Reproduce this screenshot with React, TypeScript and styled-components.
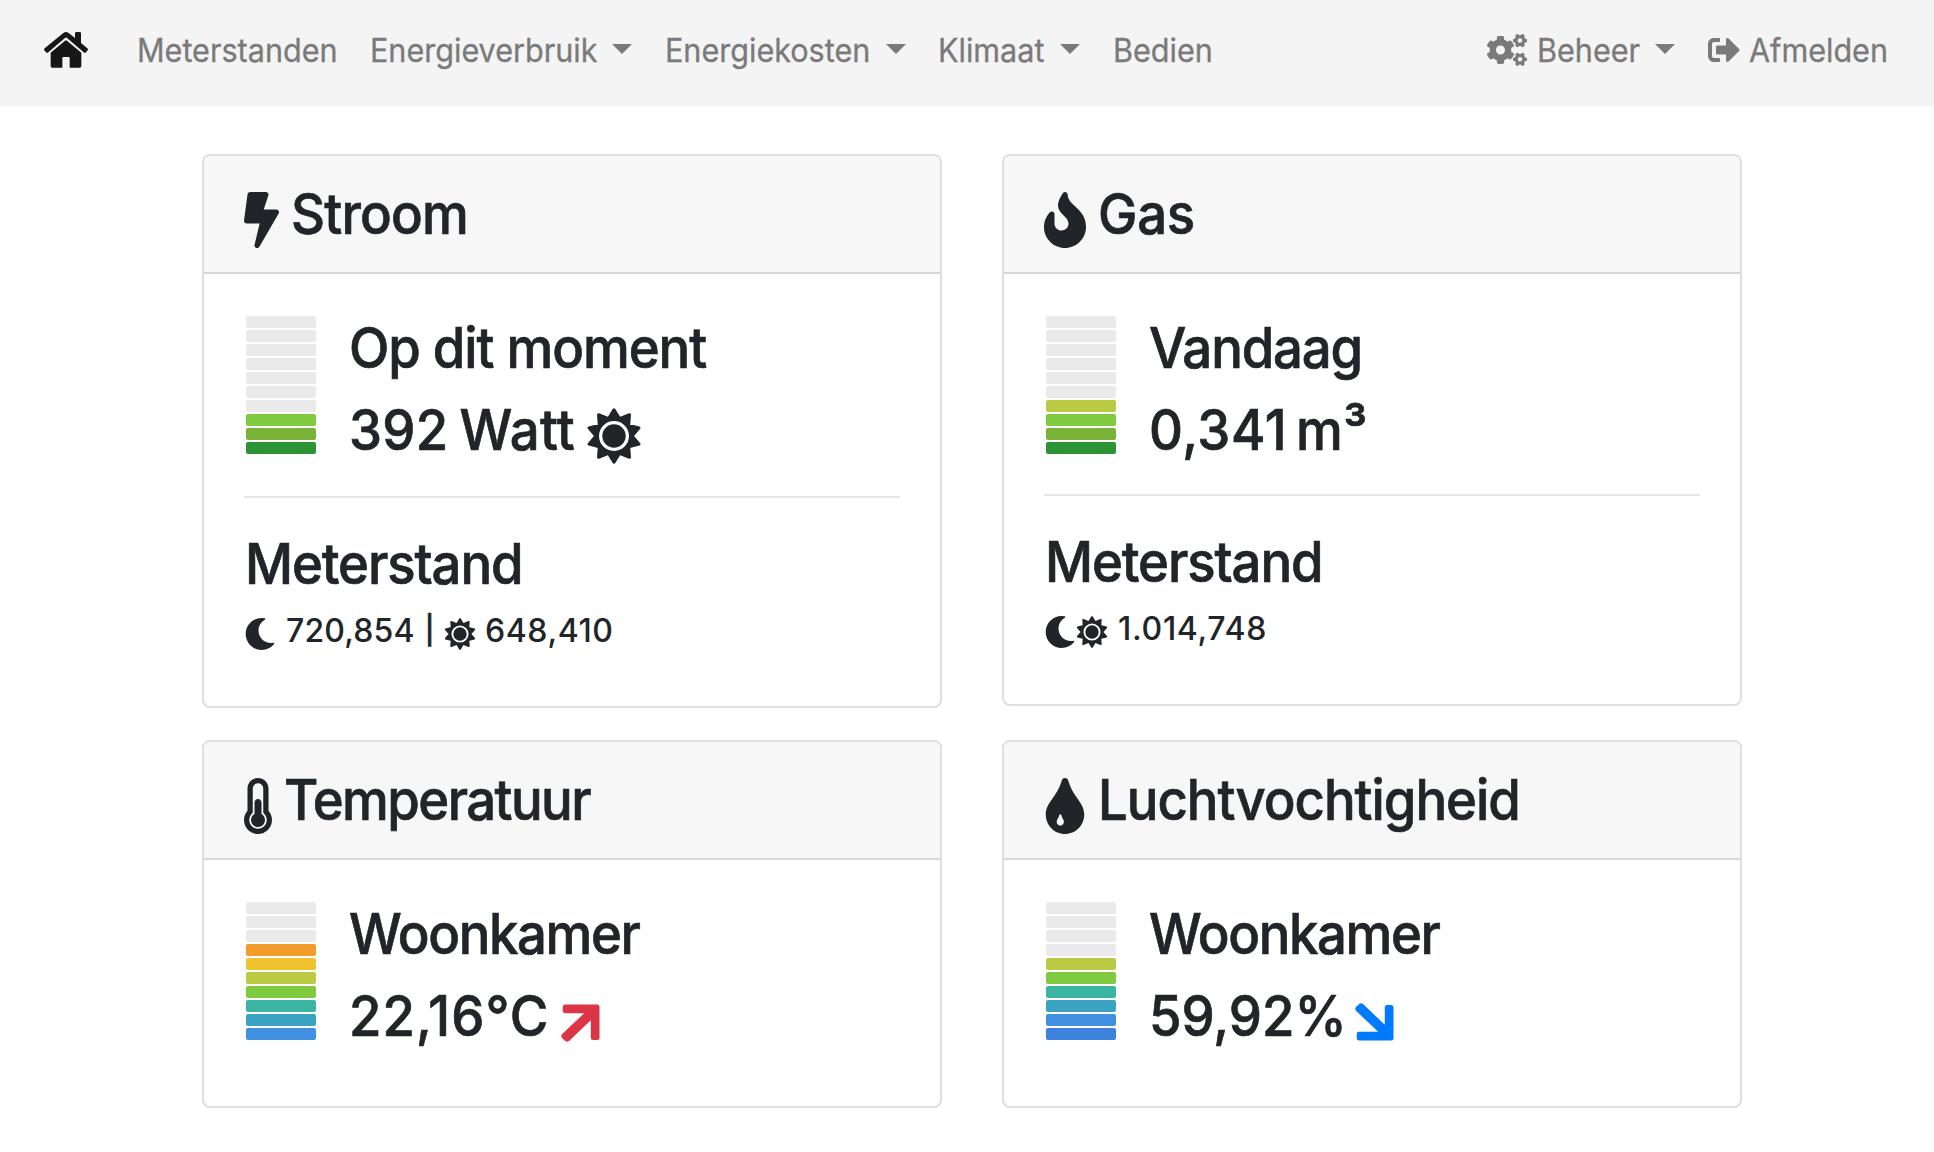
import React from "react";
import styled, { createGlobalStyle } from "styled-components";
import { FaBolt, FaCogs, FaFire, FaSignOutAlt, FaThermometerHalf } from "react-icons/fa";

const GlobalStyle = createGlobalStyle`
  * { box-sizing: border-box; }
  body {
    margin: 0;
    background: #fff;
    color: #212529;
    font-family: Inter, "Liberation Sans", sans-serif;
  }
  h2, h3, h4, p { margin: 0; font-weight: 500; }
  svg { display: block; flex: none; }
`;

/* ---------- navigation ---------- */

const NavBar = styled.nav`
  display: flex;
  justify-content: space-between;
  height: 106px;
  padding: 26px 46px 0 44px;
  background: #f4f4f4;
  color: #7a7a7a;
`;

const NavGroup = styled.div`
  display: flex;
  height: 48px;
  align-items: center;
  gap: 32.8px;
`;

const Brand = styled.a`
  margin-right: 16px;
  color: #171717;
`;

const NavItem = styled.a<{ $width: number }>`
  display: flex;
  align-items: center;
  width: ${(p) => p.$width}px;
`;

const NavText = styled.span<{ $indent?: number }>`
  margin-left: ${(p) => p.$indent ?? 0}px;
  padding-top: 2px;
  font-size: 32px;
  -webkit-text-stroke: 0.3px currentColor;
  line-height: 48px;
  white-space: nowrap;
  transform: scaleX(0.955);
  transform-origin: left center;
`;

const Caret = styled.span`
  flex: none;
  width: 0;
  margin: -2px 0 0 auto;
  border: 10px solid transparent;
  border-top-color: currentColor;
  border-bottom: 0;
`;

/* ---------- cards ---------- */

const Grid = styled.main`
  display: grid;
  grid-template-columns: 740px 740px;
  column-gap: 60px;
  row-gap: 32px;
  align-items: start;
  padding: 48px 0 0 202px;
`;

const CardBox = styled.section<{ $height: number }>`
  height: ${(p) => p.$height}px;
  border: 2px solid #dfdfdf;
  border-radius: 8px;
  overflow: hidden;
`;

const CardHeader = styled.header`
  display: flex;
  height: 118px;
  padding: 25px 40px 0;
  background: #f7f7f7;
  border-bottom: 2px solid #d8d8d8;
`;

const CardBody = styled.div`
  padding: 40px 40px 0;
`;

const IconSlot = styled.span<{ $gap?: number; $top?: number; $color?: string }>`
  flex: none;
  margin: ${(p) => p.$top ?? 11}px 0 0 ${(p) => p.$gap ?? 0}px;
  color: ${(p) => p.$color ?? "inherit"};
`;

const Heading = styled.h2<{ $spacing: number; $indent?: number; $width?: number; $word?: number }>`
  width: ${(p) => (p.$width ? p.$width + "px" : "auto")};
  margin-left: ${(p) => p.$indent ?? 0}px;
  font-size: 56px;
  -webkit-text-stroke: 0.7px currentColor;
  line-height: 67px;
  letter-spacing: ${(p) => p.$spacing}px;
  word-spacing: ${(p) => p.$word ?? 0}px;
  white-space: nowrap;
  transform: scaleX(0.94);
  transform-origin: left center;
`;

const Metric = styled.div<{ $ruled?: number }>`
  display: flex;
  gap: 32px;
  padding-left: 2px;
  height: ${(p) => p.$ruled ?? 180}px;
`;

const Gauge = styled.div`
  display: flex;
  flex-direction: column;
  gap: 2px;
  width: 70px;
  padding-top: 2px;
`;

const Segment = styled.span<{ $color: string }>`
  height: 12px;
  border-radius: 2px;
  background: ${(p) => p.$color};
`;

const Lines = styled.div`
  display: flex;
  flex-direction: column;
  gap: 15px;
  padding-top: 1px;
`;

const Line = styled.div`
  display: flex;
  height: 67px;
`;

const Rule = styled.hr`
  height: 2px;
  margin: 0 0 33px;
  border: 0;
  background: #e5e5e5;
`;

const Readings = styled.div`
  display: flex;
  margin-top: 13px;
`;

const Reading = styled.p<{ $spacing: number; $width: number; $indent: number }>`
  width: ${(p) => p.$width}px;
  margin-left: ${(p) => p.$indent}px;
  font-size: 32px;
  line-height: 39px;
  letter-spacing: ${(p) => p.$spacing}px;
  white-space: nowrap;
`;

const Separator = styled(Reading)`
  font-size: 28px;
  -webkit-text-stroke: 0.6px currentColor;
  text-align: center;
`;

/* ---------- icons ---------- */

const HomeIcon = () => (
  <svg width="44" height="36" viewBox="0 0 132 108" fill="currentColor">
    <path d="M58 3Q66-3 74 3L93 18V4Q93 0 97 0H107Q111 0 111 4V33L130 49Q133 52 131 55L126 61Q123 64 119 61L69 18Q66 15 63 18L13 61Q9 64 6 61L1 55Q-1 52 2 49Z" />
    <path d="M63 26Q66 24 69 26L112 62V102Q112 107 107 107H77V78Q77 75 74 75H58Q55 75 55 78V107H25Q20 107 20 102V62Z" />
  </svg>
);

const sunPoints = Array.from({ length: 20 }, (_, i) => {
  const radius = i % 2 ? 166 : 240;
  const angle = (i * Math.PI) / 10;
  return `${(256 + radius * Math.sin(angle)).toFixed(1)},${(256 - radius * Math.cos(angle)).toFixed(1)}`;
}).join(" ");

const SunIcon = ({ size, ring }: { size: number; ring: string }) => (
  <svg width={size} height={size} viewBox="0 0 512 512" fill="currentColor">
    <polygon points={sunPoints} stroke="currentColor" strokeWidth="28" strokeLinejoin="round" />
    <circle cx="256" cy="256" r="122" fill="none" stroke={ring} strokeWidth="30" />
  </svg>
);

const MoonIcon = () => (
  <svg width="32" height="32" viewBox="0 0 512 512" fill="currentColor">
    <path d="M283.211 512c78.962 0 151.079-35.925 198.857-94.792 7.068-8.708-.639-21.43-11.562-19.35-124.203 23.654-238.262-71.576-238.262-196.954 0-72.222 38.662-138.635 101.498-174.394 9.686-5.512 7.25-20.197-3.756-22.23A258.156 258.156 0 0 0 283.211 0c-141.309 0-256 114.511-256 256 0 141.309 114.511 256 256 256z" />
  </svg>
);

const DropIcon = () => (
  <svg width="42" height="56" viewBox="0 0 384 512" fill="currentColor">
    <path d="M221.22 22.09c-7.94-28.78-49.44-30.12-58.44 0C116.01 179.85 16 222.72 16 333.91 16 432.35 94.72 512 192 512s176-79.65 176-178.09c0-111.75-99.79-153.34-146.78-311.82z" />
    <path fill="#f7f7f7" d="M139 340c4-12 17-12 20 0 7 31 23 38 23 61 0 19-15 35-33 35s-33-16-33-35c0-23 16-30 23-61z" />
  </svg>
);

const TrendIcon = ({ falling }: { falling?: boolean }) => (
  <svg width="39" height="38" viewBox="0 0 39 38" fill="currentColor">
    <g transform={falling ? "matrix(1 0 0 -1 0 38)" : undefined}>
      <path d="M4 0.5H36Q38.5 0.5 38.5 3V33.5Q38.5 36 36 36H32.3Q29.8 36 29.8 33.5V16.2L8 37Q6 38.6 4.2 37L1 33.9Q-0.5 32 1 30.2L23.2 9.2H4Q1.7 9.2 1.7 6.8V3Q1.7 0.5 4 0.5Z" />
    </g>
  </svg>
);

/* ---------- data ---------- */

const EMPTY = "#eaeaea";
const usage = ["#2c9334", "#79b439", "#7fca3e", "#bacb43"];
const temperature = ["#3f91e0", "#3ba3c2", "#3ab5a3", "#7fca3e", "#bacb43", "#f0c230", "#f19b2d"];
const humidity = ["#3d82dd", "#3f91e0", "#3ba3c2", "#3ab5a3", "#7fca3e", "#bacb43"];

const LevelGauge = ({ levels }: { levels: string[] }) => (
  <Gauge>
    {Array.from({ length: 10 }, (_, i) => (
      <Segment key={i} $color={levels[9 - i] ?? EMPTY} />
    ))}
  </Gauge>
);

export default function App() {
  return (
    <>
      <GlobalStyle />
      <NavBar>
        <NavGroup>
          <Brand><HomeIcon /></Brand>
          <NavItem $width={199.8}><NavText>Meterstanden</NavText></NavItem>
          <NavItem $width={262.3}><NavText $indent={0.4}>Energieverbruik</NavText><Caret /></NavItem>
          <NavItem $width={241.1}><NavText $indent={0.4}>Energiekosten</NavText><Caret /></NavItem>
          <NavItem $width={141.8}><NavText>Klimaat</NavText><Caret /></NavItem>
          <NavItem $width={100}><NavText>Bedien</NavText></NavItem>
        </NavGroup>
        <NavGroup>
          <NavItem $width={187.8}>
            <FaCogs style={{ width: 40, height: 32 }} />
            <NavText $indent={9.5}>Beheer</NavText>
            <Caret />
          </NavItem>
          <NavItem $width={180}>
            <FaSignOutAlt size={32} />
            <NavText $indent={8.6}>Afmelden</NavText>
          </NavItem>
        </NavGroup>
      </NavBar>

      <Grid>
        <CardBox $height={554}>
          <CardHeader>
            <IconSlot><FaBolt style={{ width: 35, height: 56 }} /></IconSlot>
            <Heading $spacing={-0.8} $indent={12}>Stroom</Heading>
          </CardHeader>
          <CardBody>
            <Metric $ruled={182}>
              <LevelGauge levels={usage.slice(0, 3)} />
              <Lines>
                <Heading $spacing={-1.1} $indent={0.6}>Op dit moment</Heading>
                <Line>
                  <Heading $spacing={0.3} $word={-3.5} $indent={0.6} $width={237.4}>392 Watt</Heading>
                  <IconSlot><SunIcon size={56} ring="#fff" /></IconSlot>
                </Line>
              </Lines>
            </Metric>
            <Rule />
            <Heading $spacing={-1.15} $indent={0.6}>Meterstand</Heading>
            <Readings>
              <IconSlot $top={7}><MoonIcon /></IconSlot>
              <Reading $spacing={0.13} $width={134} $indent={10}>720,854</Reading>
              <Separator $spacing={0} $width={20} $indent={-0.5}>|</Separator>
              <IconSlot $top={7} $gap={4.5}><SunIcon size={32} ring="#fff" /></IconSlot>
              <Reading $spacing={0.6} $width={134} $indent={9}>648,410</Reading>
            </Readings>
          </CardBody>
        </CardBox>

        <CardBox $height={552}>
          <CardHeader>
            <IconSlot><FaFire style={{ width: 42, height: 56 }} /></IconSlot>
            <Heading $spacing={-0.2} $indent={11.5}>Gas</Heading>
          </CardHeader>
          <CardBody>
            <Metric>
              <LevelGauge levels={usage} />
              <Lines>
                <Heading $spacing={-1.2} $indent={1}>Vandaag</Heading>
                <Heading $spacing={0.6} $word={-6} $indent={0.6}>0,341 m³</Heading>
              </Lines>
            </Metric>
            <Rule />
            <Heading $spacing={-1.15} $indent={0.6}>Meterstand</Heading>
            <Readings>
              <IconSlot $top={7}><MoonIcon /></IconSlot>
              <IconSlot $top={7}><SunIcon size={32} ring="#fff" /></IconSlot>
              <Reading $spacing={0.7} $width={160} $indent={10}>1.014,748</Reading>
            </Readings>
          </CardBody>
        </CardBox>

        <CardBox $height={368}>
          <CardHeader>
            <IconSlot><FaThermometerHalf style={{ width: 28, height: 56 }} /></IconSlot>
            <Heading $spacing={-1.65} $indent={11.5}>Temperatuur</Heading>
          </CardHeader>
          <CardBody>
            <Metric>
              <LevelGauge levels={temperature} />
              <Lines>
                <Heading $spacing={-1.45} $indent={1.4}>Woonkamer</Heading>
                <Line>
                  <Heading $spacing={1.1} $indent={0.5} $width={212.2}>22,16°C</Heading>
                  <IconSlot $top={20.5} $color="#dc3545"><TrendIcon /></IconSlot>
                </Line>
              </Lines>
            </Metric>
          </CardBody>
        </CardBox>

        <CardBox $height={368}>
          <CardHeader>
            <IconSlot><DropIcon /></IconSlot>
            <Heading $spacing={-1.06} $indent={12}>Luchtvochtigheid</Heading>
          </CardHeader>
          <CardBody>
            <Metric>
              <LevelGauge levels={humidity} />
              <Lines>
                <Heading $spacing={-1.45} $indent={1.4}>Woonkamer</Heading>
                <Line>
                  <Heading $spacing={0} $indent={0.6} $width={206.8}>59,92%</Heading>
                  <IconSlot $top={19.5} $color="#007bff"><TrendIcon falling /></IconSlot>
                </Line>
              </Lines>
            </Metric>
          </CardBody>
        </CardBox>
      </Grid>
    </>
  );
}
